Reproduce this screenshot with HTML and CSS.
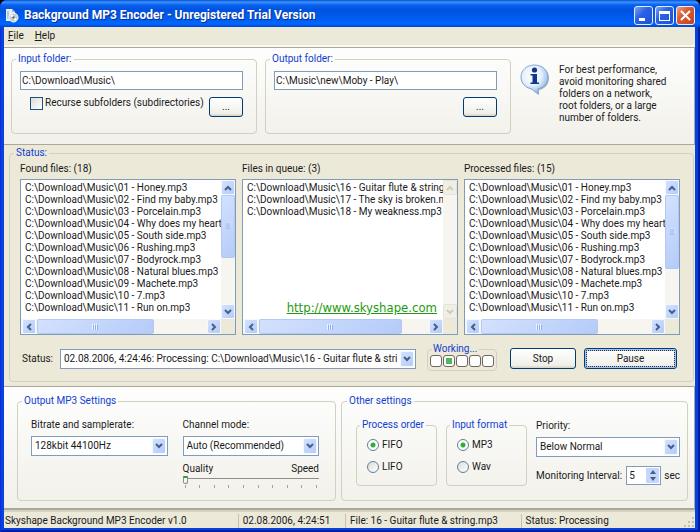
FILE: index.html
```
<!DOCTYPE html>
<html lang="en">
<head>
    <meta charset="UTF-8">
    <meta name="viewport" content="width=device-width, initial-scale=1.0">
    <title>Background MP3 Encoder</title>
    <link rel="stylesheet" href="styles.css">
</head>
<body>
    <svg class="defs" width="0" height="0" aria-hidden="true">
        <defs>
            <symbol id="chevron" viewBox="0 0 8 6">
                <path d="M1 1l3 3 3-3" fill="none" stroke="currentColor" stroke-width="2"/>
            </symbol>
            <symbol id="grip" viewBox="0 0 7 6">
                <path d="M.5 0v6M2.5 0v6M4.5 0v6" stroke="#eef4fe"/>
                <path d="M1.5 1v5M3.5 1v5M5.5 1v5" stroke="#8cb0f8"/>
            </symbol>
        </defs>
    </svg>

    <div class="window">
        <header class="title-bar">
            <svg class="app-icon" viewBox="0 0 14 15">
                <path d="M1 1h6l3 3v9H1z" fill="#e8eef4"/>
                <path d="M7 1l3 3H7z" fill="#9fb4c8"/>
                <path d="M2 3h2v8H2z" fill="#b9c6cf"/>
                <circle cx="8.5" cy="9.5" r="4.5" fill="#c3cdd2" stroke="#f4f7f8" stroke-width="1"/>
                <path d="M6 7l2.500 2.500M11 12L8.500 9.500" stroke="#fff" stroke-width="2"/>
                <circle cx="8.500" cy="9.500" r="1.300" fill="#53707f"/>
            </svg>
            <h1>Background MP3 Encoder - Unregistered Trial Version</h1>
            <div class="window-buttons">
                <button type="button" aria-label="Minimize">
                    <svg viewBox="0 0 17 17"><path d="M4 11h6v3H4z" fill="#fff"/></svg>
                </button>
                <button type="button" aria-label="Maximize">
                    <svg viewBox="0 0 17 17"><path d="M3 4h11v10H3zM4 7v6h9V7z" fill="#fff" fill-rule="evenodd"/></svg>
                </button>
                <button type="button" class="close" aria-label="Close">
                    <svg viewBox="0 0 17 17"><path d="M4 4l9 9M13 4l-9 9" stroke="#fff" stroke-width="2"/></svg>
                </button>
            </div>
        </header>

        <nav class="menu-bar">
            <button type="button"><u>F</u>ile</button>
            <button type="button"><u>H</u>elp</button>
        </nav>

        <section class="panel folders">
            <fieldset class="folder">
                <legend>Input folder:</legend>
                <input type="text" class="path" value="C:\Download\Music\" aria-label="Input folder">
                <div class="folder-row">
                    <label class="check"><input type="checkbox">Recurse subfolders (subdirectories)</label>
                    <button type="button" class="button browse" aria-label="Browse input folder">...</button>
                </div>
            </fieldset>
            <fieldset class="folder">
                <legend>Output folder:</legend>
                <input type="text" class="path" value="C:\Music\new\Moby - Play\" aria-label="Output folder">
                <div class="folder-row">
                    <button type="button" class="button browse" aria-label="Browse output folder">...</button>
                </div>
            </fieldset>
            <div class="hint">
                <svg class="info-icon" viewBox="0 0 30 32">
                    <defs>
                        <radialGradient id="bubble" cx="40%" cy="35%" r="65%">
                            <stop offset="0" stop-color="#fff"/>
                            <stop offset=".55" stop-color="#e4f0fc"/>
                            <stop offset="1" stop-color="#8db8e8"/>
                        </radialGradient>
                    </defs>
                    <path d="M16 2C8 2 3 7 3 14s4 10 10 12l6 5v-5c6-1 10-6 10-12S24 2 16 2z" fill="#7d8ca6" opacity=".7"/>
                    <path d="M14.500 1C7 1 1 6 1 13c0 6 4 10.500 10 11.700L18 30v-5.300c6-1.200 10-5.700 10-11.700C28 6 22 1 14.500 1z" fill="url(#bubble)" stroke="#86a8d4"/>
                    <circle cx="14.500" cy="6" r="2.600" fill="#10358f"/>
                    <path d="M10.500 10h6.500v8.500h2V20h-8.500v-1.500h2v-7h-2z" fill="#10358f"/>
                </svg>
                <p>For best performance,<br>avoid monitoring shared<br>folders on a network,<br>root folders, or a large<br>number of folders.</p>
            </div>
        </section>

        <section class="status-area">
            <fieldset class="status">
                <legend>Status:</legend>
                <div class="lists">
                    <div class="list-column">
                        <h2>Found files: (18)</h2>
                        <div class="list-box">
                            <ul>
                                <li>C:\Download\Music\01 - Honey.mp3</li>
                                <li>C:\Download\Music\02 - Find my baby.mp3</li>
                                <li>C:\Download\Music\03 - Porcelain.mp3</li>
                                <li>C:\Download\Music\04 - Why does my heart</li>
                                <li>C:\Download\Music\05 - South side.mp3</li>
                                <li>C:\Download\Music\06 - Rushing.mp3</li>
                                <li>C:\Download\Music\07 - Bodyrock.mp3</li>
                                <li>C:\Download\Music\08 - Natural blues.mp3</li>
                                <li>C:\Download\Music\09 - Machete.mp3</li>
                                <li>C:\Download\Music\10 - 7.mp3</li>
                                <li>C:\Download\Music\11 - Run on.mp3</li>
                            </ul>
                            <div class="scroll vertical">
                                <span class="arrow up"><svg><use href="#chevron"/></svg></span>
                                <span class="thumb" style="height: 45%"><svg><use href="#grip"/></svg></span>
                                <span class="arrow down"><svg><use href="#chevron"/></svg></span>
                            </div>
                            <div class="scroll horizontal">
                                <span class="arrow left"><svg><use href="#chevron"/></svg></span>
                                <span class="thumb" style="width: 59%"><svg><use href="#grip"/></svg></span>
                                <span class="arrow right"><svg><use href="#chevron"/></svg></span>
                            </div>
                        </div>
                    </div>
                    <div class="list-column">
                        <h2>Files in queue: (3)</h2>
                        <div class="list-box">
                            <ul>
                                <li>C:\Download\Music\16 - Guitar flute &amp; string</li>
                                <li>C:\Download\Music\17 - The sky is broken.mp3</li>
                                <li>C:\Download\Music\18 - My weakness.mp3</li>
                            </ul>
                            <a class="site-link" href="#">http://www.skyshape.com</a>
                            <div class="scroll vertical disabled">
                                <span class="arrow up"><svg><use href="#chevron"/></svg></span>
                                <span class="arrow down"><svg><use href="#chevron"/></svg></span>
                            </div>
                            <div class="scroll horizontal">
                                <span class="arrow left"><svg><use href="#chevron"/></svg></span>
                                <span class="thumb" style="width: 72%"><svg><use href="#grip"/></svg></span>
                                <span class="arrow right"><svg><use href="#chevron"/></svg></span>
                            </div>
                        </div>
                    </div>
                    <div class="list-column">
                        <h2>Processed files: (15)</h2>
                        <div class="list-box">
                            <ul>
                                <li>C:\Download\Music\01 - Honey.mp3</li>
                                <li>C:\Download\Music\02 - Find my baby.mp3</li>
                                <li>C:\Download\Music\03 - Porcelain.mp3</li>
                                <li>C:\Download\Music\04 - Why does my heart</li>
                                <li>C:\Download\Music\05 - South side.mp3</li>
                                <li>C:\Download\Music\06 - Rushing.mp3</li>
                                <li>C:\Download\Music\07 - Bodyrock.mp3</li>
                                <li>C:\Download\Music\08 - Natural blues.mp3</li>
                                <li>C:\Download\Music\09 - Machete.mp3</li>
                                <li>C:\Download\Music\10 - 7.mp3</li>
                                <li>C:\Download\Music\11 - Run on.mp3</li>
                            </ul>
                            <div class="scroll vertical">
                                <span class="arrow up"><svg><use href="#chevron"/></svg></span>
                                <span class="thumb" style="height: 53%"><svg><use href="#grip"/></svg></span>
                                <span class="arrow down"><svg><use href="#chevron"/></svg></span>
                            </div>
                            <div class="scroll horizontal">
                                <span class="arrow left"><svg><use href="#chevron"/></svg></span>
                                <span class="thumb" style="width: 59%"><svg><use href="#grip"/></svg></span>
                                <span class="arrow right"><svg><use href="#chevron"/></svg></span>
                            </div>
                        </div>
                    </div>
                </div>
                <div class="status-row">
                    <label for="status-log">Status:</label>
                    <div class="combo status-combo">
                        <select id="status-log">
                            <option>02.08.2006, 4:24:46: Processing: C:\Download\Music\16 - Guitar flute &amp; string.mp3</option>
                        </select>
                        <span class="drop"><svg><use href="#chevron"/></svg></span>
                    </div>
                    <fieldset class="working">
                        <legend>Working...</legend>
                        <div class="lights">
                            <span></span>
                            <span class="on"></span>
                            <span></span>
                            <span></span>
                            <span></span>
                        </div>
                    </fieldset>
                    <button type="button" class="button stop">Stop</button>
                    <button type="button" class="button pause">Pause</button>
                </div>
            </fieldset>
        </section>

        <section class="panel settings">
            <fieldset class="output-settings">
                <legend>Output MP3 Settings</legend>
                <div class="field">
                    <label for="bitrate">Bitrate and samplerate:</label>
                    <div class="combo">
                        <select id="bitrate"><option>128kbit 44100Hz</option></select>
                        <span class="drop"><svg><use href="#chevron"/></svg></span>
                    </div>
                </div>
                <div class="field">
                    <label for="channel">Channel mode:</label>
                    <div class="combo">
                        <select id="channel"><option>Auto (Recommended)</option></select>
                        <span class="drop"><svg><use href="#chevron"/></svg></span>
                    </div>
                    <div class="quality">
                        <label class="quality-labels" for="quality"><span>Quality</span><span>Speed</span></label>
                        <input type="range" id="quality" min="0" max="9" value="0">
                        <div class="ticks">
                            <i></i><i></i><i></i><i></i><i></i><i></i><i></i><i></i><i></i><i></i>
                        </div>
                    </div>
                </div>
            </fieldset>

            <fieldset class="other-settings">
                <legend>Other settings</legend>
                <fieldset class="radios">
                    <legend>Process order</legend>
                    <label><input type="radio" name="order" checked>FIFO</label>
                    <label><input type="radio" name="order">LIFO</label>
                </fieldset>
                <fieldset class="radios">
                    <legend>Input format</legend>
                    <label><input type="radio" name="format" checked>MP3</label>
                    <label><input type="radio" name="format">Wav</label>
                </fieldset>
                <div class="field priority">
                    <label for="priority">Priority:</label>
                    <div class="combo">
                        <select id="priority"><option>Below Normal</option></select>
                        <span class="drop"><svg><use href="#chevron"/></svg></span>
                    </div>
                    <div class="interval">
                        <label for="interval">Monitoring Interval:</label>
                        <div class="spinner">
                            <input type="text" id="interval" value="5">
                            <div class="spin-buttons">
                                <button type="button" aria-label="Increase"><svg viewBox="0 0 6 4"><path d="M0 4l3-4 3 4z"/></svg></button>
                                <button type="button" aria-label="Decrease"><svg viewBox="0 0 6 4"><path d="M0 0l3 4 3-4z"/></svg></button>
                            </div>
                        </div>
                        <span>sec</span>
                    </div>
                </div>
            </fieldset>
        </section>

        <footer class="status-bar">
            <span>Skyshape Background MP3 Encoder v1.0</span>
            <span>02.08.2006, 4:24:51</span>
            <span>File: 16 - Guitar flute &amp; string.mp3</span>
            <span>Status: Processing</span>
            <svg class="resize-grip" viewBox="0 0 12 12">
                <path d="M9 1h2v2H9zM5 5h2v2H5zM9 5h2v2H9zM1 9h2v2H1zM5 9h2v2H5zM9 9h2v2H9z" fill="#c3bfae"/>
            </svg>
        </footer>
    </div>
</body>
</html>
```
FILE: styles.css
```
* {
    box-sizing: border-box;
}

body {
    margin: 0;
    background: #000;
    color: #1a1a1a;
    font-family: Roboto, "Liberation Sans", sans-serif;
    font-size: 10px;
    line-height: 12px;
}

button,
input,
select {
    margin: 0;
    padding: 0;
    color: inherit;
    font: inherit;
}

svg {
    display: block;
}

.defs {
    position: absolute;
}

.window {
    display: flex;
    flex-direction: column;
    min-height: 100vh;
    padding: 0 5px 4px 4px;
    border-radius: 7px 7px 0 0;
    background: #0a3fe0;
    box-shadow: inset 1px 0 #0831d9, inset -2px -2px #001ea0;
}

/* title bar */

.title-bar {
    display: flex;
    align-items: center;
    height: 27px;
    margin: 0 -5px 0 -4px;
    padding: 3px 5px 0 5px;
    border-radius: 7px 7px 0 0;
    background: linear-gradient(#0a50d0 0, #3a94ff 8%, #0a62ee 18%, #0053e0 35%, #0058ea 60%, #0066ff 88%, #0048cc 100%);
}

.app-icon {
    width: 14px;
    height: 15px;
    margin-right: 5px;
}

.title-bar h1 {
    flex: 1;
    margin: 0;
    color: #fff;
    font-size: 12px;
    line-height: 16px;
    text-shadow: 1px 1px #0a2f8c;
}

.window-buttons {
    display: flex;
    gap: 2px;
}

.window-buttons button {
    width: 19px;
    height: 19px;
    border: 1px solid #e6eefc;
    border-radius: 3px;
    background: linear-gradient(135deg, #7da2f5, #2d62e4 40%, #1d50d8);
}

.window-buttons .close {
    background: linear-gradient(135deg, #f0a184, #dc5a30 40%, #c8401a);
}

.window-buttons svg {
    width: 17px;
    height: 17px;
}

/* menu */

.menu-bar {
    display: flex;
    gap: 11px;
    height: 20px;
    padding: 0 4px;
    background: #ece9d8;
    border-bottom: 2px solid #f8f7f0;
}

.menu-bar button {
    border: 0;
    background: none;
    line-height: 16px;
}

/* panels and group boxes */

.panel {
    display: flex;
    border: 1px solid #aca899;
    border-left: 0;
    background: linear-gradient(#fefefe, #f1f0e9);
}

fieldset {
    min-width: 0;
    margin: 0;
    padding: 0;
    border: 1px solid #d2d0bf;
    border-radius: 4px;
}

legend {
    padding: 0 2px;
    color: #1040d0;
    line-height: 14px;
    white-space: nowrap;
}

.folders {
    gap: 8px;
    padding: 4px 10px 10px 7px;
}

.folder {
    flex: 223;
    padding: 5px 13px 16px 8px;
}

.folder legend {
    margin-left: -4px;
}

.path {
    width: 100%;
    height: 19px;
    padding: 0 1px;
    border: 1px solid #7f9db9;
    background: #fff;
}

.folder-row {
    display: flex;
    justify-content: flex-end;
    margin-top: 7px;
}

.check {
    display: flex;
    align-items: flex-start;
    gap: 2px;
    flex: 1;
    padding-left: 10px;
    white-space: nowrap;
}

.check input {
    appearance: none;
    flex: none;
    width: 13px;
    height: 13px;
    border: 1px solid #1c5180;
    background: linear-gradient(135deg, #dcdcd7, #fff);
}

.button {
    flex: none;
    border: 1px solid #003c74;
    border-radius: 3px;
    background: linear-gradient(#fff, #f0f0ea 85%, #d6d0c5);
}

.browse {
    width: 34px;
    height: 20px;
}

.hint {
    display: flex;
    flex: 164;
    gap: 9px;
    padding: 12px 0 0 1px;
}

.info-icon {
    flex: none;
    width: 30px;
    height: 32px;
}

.hint p {
    margin: 0;
    white-space: nowrap;
}

/* status */

.status-area {
    padding: 1px 1px 4px 5px;
    background: #ece9d8;
}

.status {
    padding: 3px 13px 7px 10px;
}

.status > legend {
    margin-left: -6px;
}

.lists {
    display: grid;
    grid-template-columns: repeat(3, 1fr);
    gap: 6px;
}

.list-column {
    min-width: 0;
}

.list-column h2 {
    margin: 0 0 4px;
    font-size: 10px;
    font-weight: normal;
    line-height: 12px;
}

.list-box {
    display: grid;
    grid-template-columns: 1fr 14px;
    grid-template-rows: 139px 15px;
    position: relative;
    border: 1px solid #7f9db9;
    background: #ece9d8;
}

.list-box ul {
    min-width: 0;
    margin: 0;
    padding: 2px 0 0 4px;
    overflow: hidden;
    list-style: none;
    background: #fff;
    white-space: nowrap;
}

.site-link {
    position: absolute;
    right: 20px;
    bottom: 18px;
    color: #1f9a10;
    font-family: "DejaVu Sans Condensed", sans-serif;
    font-size: 13px;
    line-height: 16px;
}

.scroll {
    display: flex;
    background: #f6f5f0;
}

.scroll.vertical {
    flex-direction: column;
    grid-column: 2;
    grid-row: 1;
}

.scroll.horizontal {
    grid-column: 1;
    grid-row: 2;
    padding-left: 1px;
    gap: 1px;
}

.arrow,
.thumb,
.drop {
    display: flex;
    align-items: center;
    justify-content: center;
    border: 1px solid #f4f8ff;
    border-radius: 2px;
    background: linear-gradient(135deg, #d3e1fe, #b5cbf8);
    color: #45608a;
}

.arrow {
    flex: none;
    width: 14px;
    height: 15px;
}

.arrow svg,
.drop svg {
    width: 8px;
    height: 6px;
}

.thumb svg {
    width: 7px;
    height: 6px;
}

.thumb {
    border-color: #b4c8f4;
}

.arrow.down,
.arrow.right {
    margin-top: auto;
}

.horizontal .arrow.right {
    margin: 0 0 0 auto;
}

.up svg {
    transform: rotate(180deg);
}

.left svg {
    transform: rotate(90deg);
}

.right svg {
    transform: rotate(-90deg);
}

.vertical .thumb svg {
    transform: rotate(90deg);
}

.disabled .arrow {
    background: #f0efe6;
    border-color: #e6e4d8;
    color: #cfccba;
}

.status-row {
    display: flex;
    align-items: center;
    margin-top: 8px;
    padding: 0 3px 0 2px;
}

.status-row > label {
    flex: none;
    width: 38px;
}

.combo {
    display: flex;
    height: 20px;
    padding: 1px;
    border: 1px solid #7f9db9;
    background: #fff;
}

.combo select {
    appearance: none;
    flex: 1;
    min-width: 0;
    padding: 0 3px 0 2px;
    border: 0;
    background: #fff;
    overflow: hidden;
}

.drop {
    flex: none;
    width: 14px;
    pointer-events: none;
}

.status-combo {
    flex: 1;
    min-width: 0;
}

.working {
    flex: none;
    margin: 0 13px 3px 11px;
    padding: 0 2px 3px;
}

.working legend {
    margin-left: 2px;
    padding: 0 1px;
    line-height: 12px;
}

.lights {
    display: flex;
    gap: 1px;
}

.lights span {
    display: flex;
    align-items: center;
    justify-content: center;
    width: 12px;
    height: 12px;
    border: 1px solid #6e6660;
    border-radius: 3px;
    background: #fff;
}

.lights .on::before {
    content: '';
    width: 6px;
    height: 6px;
    background: #4cb85c;
}

.stop {
    width: 66px;
    height: 21px;
}

.pause {
    width: 93px;
    height: 21px;
    margin-left: 8px;
    box-shadow: inset 0 0 0 2px #a6c2f0;
    outline: 1px dotted #333;
    outline-offset: -3px;
}

/* settings */

.settings {
    flex: 1;
    gap: 5px;
    padding: 7px 6px 7px 13px;
    border-bottom-width: 2px;
}

.output-settings {
    display: flex;
    flex: 288;
    gap: 15px;
    padding: 11px 16px 12px 13px;
}

.settings > fieldset > legend {
    margin-left: -9px;
}

.output-settings .field {
    flex: 1;
    min-width: 0;
}

.field > label {
    display: block;
    margin-bottom: 5px;
}

.quality {
    padding-top: 7px;
}

.quality-labels {
    display: flex;
    justify-content: space-between;
}

.quality input {
    appearance: none;
    display: block;
    width: 100%;
    height: 9px;
    background: linear-gradient(#8f8d85, #8f8d85) 0 3px / 100% 1px no-repeat;
}

.quality input::-webkit-slider-thumb {
    appearance: none;
    width: 5px;
    height: 8px;
    border: 1px solid #85908c;
    border-top: 2px solid #30a030;
    border-radius: 0 0 3px 3px;
    background: #f6f5f0;
}

.ticks {
    display: flex;
    justify-content: space-between;
    padding: 1px 2px 0;
}

.ticks i {
    width: 1px;
    height: 3px;
    background: #a5a294;
}

.other-settings {
    display: flex;
    flex: 324;
    align-items: flex-start;
    gap: 9px;
    padding: 10px 7px 8px 14px;
}

.radios {
    flex: 69;
    padding: 2px 0 7px 10px;
}

.radios legend {
    margin-left: -7px;
}

.radios label {
    display: flex;
    align-items: center;
    gap: 3px;
    height: 22px;
}

.radios input {
    appearance: none;
    width: 12px;
    height: 12px;
    border: 1px solid #5c7f9f;
    border-radius: 50%;
    background: linear-gradient(135deg, #dcdcd7, #fff);
}

.radios input:checked {
    background: radial-gradient(#2fae2f 0 2px, #fff 3px);
}

.priority {
    flex: 144;
    padding-top: 2px;
}

.interval {
    display: flex;
    align-items: center;
    gap: 3px;
    margin-top: 9px;
    white-space: nowrap;
}

.interval label {
    flex: 1;
}

.spinner {
    display: flex;
    flex: none;
    width: 35px;
    height: 19px;
    padding: 1px;
    border: 1px solid #7f9db9;
    background: #fff;
}

.spinner input {
    flex: 1;
    min-width: 0;
    padding-left: 1px;
    border: 0;
}

.spin-buttons {
    display: flex;
    flex-direction: column;
    width: 13px;
}

.spin-buttons button {
    display: flex;
    flex: 1;
    align-items: center;
    justify-content: center;
    border: 0;
    border-radius: 1px;
    background: #c4d6fc;
}

.spin-buttons svg {
    width: 6px;
    height: 4px;
    fill: #45608a;
}

/* status bar */

.status-bar {
    display: flex;
    align-items: flex-end;
    height: 18px;
    border-top: 2px solid #d5d2c1;
    background: #ece9d8;
}

.status-bar span {
    padding: 1px 0 1px 4px;
    border-left: 1px solid #c5c2b0;
    white-space: nowrap;
}

.status-bar span:nth-child(1) {
    flex: 232;
    padding-left: 1px;
    border: 0;
}

.status-bar span:nth-child(2) {
    flex: 102;
}

.status-bar span:nth-child(3) {
    flex: 170;
}

.status-bar span:nth-child(4) {
    flex: 157;
}

.resize-grip {
    width: 12px;
    height: 12px;
}
```
